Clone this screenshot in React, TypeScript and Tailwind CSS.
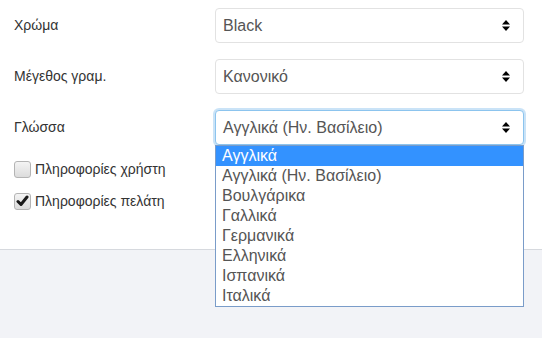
const font = { fontFamily: '"Liberation Sans", Arial, sans-serif' }

const languages = [
  'Αγγλικά',
  'Αγγλικά (Ην. Βασίλειο)',
  'Βουλγάρικα',
  'Γαλλικά',
  'Γερμανικά',
  'Ελληνικά',
  'Ισπανικά',
  'Ιταλικά',
]

function Carets() {
  return (
    <svg width="8" height="11" viewBox="0 0 8 11" className="text-black">
      <path d="M4 0 L8 4.5 L0 4.5 Z" fill="currentColor" />
      <path d="M0 6.5 L8 6.5 L4 11 Z" fill="currentColor" />
    </svg>
  )
}

function SelectBox({ value, focused }: { value: string; focused?: boolean }) {
  return (
    <div
      className={
        'flex h-[35px] w-[309px] items-center justify-between rounded-[4px] border bg-white pr-[13px] pl-[7px] text-[16px] text-[#555] ' +
        (focused
          ? 'border-[#8cc4ee] shadow-[0_0_0_2px_rgba(102,175,233,0.35)]'
          : 'border-[#e2e2e2]')
      }
    >
      <span>{value}</span>
      <Carets />
    </div>
  )
}

function Row({ label, children }: { label: string; children: React.ReactNode }) {
  return (
    <div className="flex items-center">
      <div className="w-[201px] text-[14px] text-[#333]">{label}</div>
      {children}
    </div>
  )
}

function Checkbox({ checked, label }: { checked?: boolean; label: string }) {
  return (
    <div className="flex h-[20px] items-center gap-[4px]">
      <div className="flex size-[17px] items-center justify-center rounded-[3px] border border-[#b4b4b4] bg-gradient-to-b from-[#f4f4f4] to-[#dcdcdc]">
        {checked && (
          <svg width="13" height="12" viewBox="0 0 13 12">
            <path d="M2 6.5 L5 9.5 L11 2" stroke="#1a1a1a" strokeWidth="3" fill="none" strokeLinecap="round" strokeLinejoin="round" />
          </svg>
        )}
      </div>
      <span className="text-[14px] leading-[20px] text-[#333]">{label}</span>
    </div>
  )
}

export default function App() {
  return (
    <div className="flex h-[338px] w-[542px] flex-col bg-white" style={font}>
      <div className="flex h-[249px] flex-col pt-[8px] pl-[14px]">
        <div className="flex flex-col gap-[16px]">
          <Row label="Χρώμα">
            <SelectBox value="Black" />
          </Row>
          <Row label="Μέγεθος γραμ.">
            <SelectBox value="Κανονικό" />
          </Row>
          <Row label="Γλώσσα">
            <div className="relative">
              <SelectBox value="Αγγλικά (Ην. Βασίλειο)" focused />
              <div className="absolute top-[35px] left-0 z-10 w-[309px] border border-[#7a9cc9] bg-white text-[16px] text-[#555]">
                {languages.map((lang, i) => (
                  <div
                    key={lang}
                    className={
                      'h-[20px] pl-[6px] leading-[20px] ' +
                      (i === 0 ? 'bg-[#3392ff] text-white' : '')
                    }
                  >
                    {lang}
                  </div>
                ))}
              </div>
            </div>
          </Row>
        </div>
        <div className="mt-[14px] flex flex-col gap-[12px]">
          <Checkbox label="Πληροφορίες χρήστη" />
          <Checkbox checked label="Πληροφορίες πελάτη" />
        </div>
      </div>
      <div className="flex-1 border-t border-[#d6d9de] bg-[#f2f3f7]" />
    </div>
  )
}
